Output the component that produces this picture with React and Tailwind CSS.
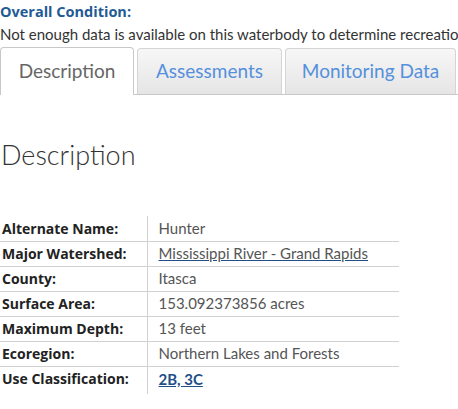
import React from 'react';

const rows = [
  { label: 'Alternate Name:', value: 'Hunter' },
  { label: 'Major Watershed:', value: 'Mississippi River - Grand Rapids', link: true },
  { label: 'County:', value: 'Itasca' },
  { label: 'Surface Area:', value: '153.092373856 acres' },
  { label: 'Maximum Depth:', value: '13 feet' },
  { label: 'Ecoregion:', value: 'Northern Lakes and Forests' },
  { label: 'Use Classification:', value: '2B, 3C', link: true, bold: true },
];

const tabs = ['Description', 'Assessments', 'Monitoring Data'];

export default function App() {
  return (
    <div className="w-[458px] h-[409px] overflow-hidden bg-white text-[#333]" style={{ fontFamily: 'Lato, "Open Sans", sans-serif' }}>
      {/* Condition summary */}
      <div className="pt-[3px]">
        <div className="text-[14.5px] font-bold text-[#1f5b94] leading-[18px]" style={{ fontFamily: '"Open Sans", sans-serif' }}>
          Overall Condition:
        </div>
        <div className="text-[15px] leading-[22px] whitespace-nowrap text-[#333] mt-[2px]">
          Not enough data is available on this waterbody to determine recreational suitability.
        </div>
      </div>

      {/* Tabs */}
      <div className="flex items-end mt-[2px] h-[48px] border-b border-[#c8c8c8]">
        {tabs.map((t, i) => (
          <div
            key={t}
            className={
              i === 0
                ? 'h-[48px] w-[134px] -mb-px bg-white border border-b-0 border-[#c8c8c8] rounded-t-[4px] flex items-center justify-center text-[19px] text-[#666]'
                : 'h-[46px] ml-[3px] bg-gradient-to-b from-[#f7f7f7] to-[#e5e5e5] border border-b-0 border-[#d4d4d4] rounded-t-[4px] flex items-center justify-center text-[19px] text-[#5590dc]'
            }
            style={i === 1 ? { width: 145 } : i === 2 ? { width: 171 } : undefined}
          >
            {t}
          </div>
        ))}
      </div>

      <h2 className="text-[27px] font-light text-[#333] mt-[44px] ml-[1px] leading-[32px]">Description</h2>

      {/* Details table */}
      <table className="mt-[45px] w-[399px] border-collapse">
        <tbody>
          {rows.map((r, i) => (
            <tr key={r.label} className={i < rows.length - 1 ? 'border-b border-[#d0d0d0]' : ''}>
              <td
                className="w-[147px] h-[25px] pl-[2px] text-[14px] font-bold text-[#222] border-r border-[#d0d0d0]"
                style={{ fontFamily: '"Open Sans", Lato, sans-serif' }}
              >
                {r.label}
              </td>
              <td className="pl-[11px] text-[15px] text-[#555]">
                {r.link ? (
                  <a
                    href="#"
                    className={'underline decoration-[#1f4f86] ' + (r.bold ? 'font-bold text-[#1f4f86]' : 'text-[#555]')}
                  >
                    {r.value}
                  </a>
                ) : (
                  r.value
                )}
              </td>
            </tr>
          ))}
          <tr>
            <td className="h-[3px] border-r border-[#d0d0d0]" />
            <td />
          </tr>
        </tbody>
      </table>
    </div>
  );
}
